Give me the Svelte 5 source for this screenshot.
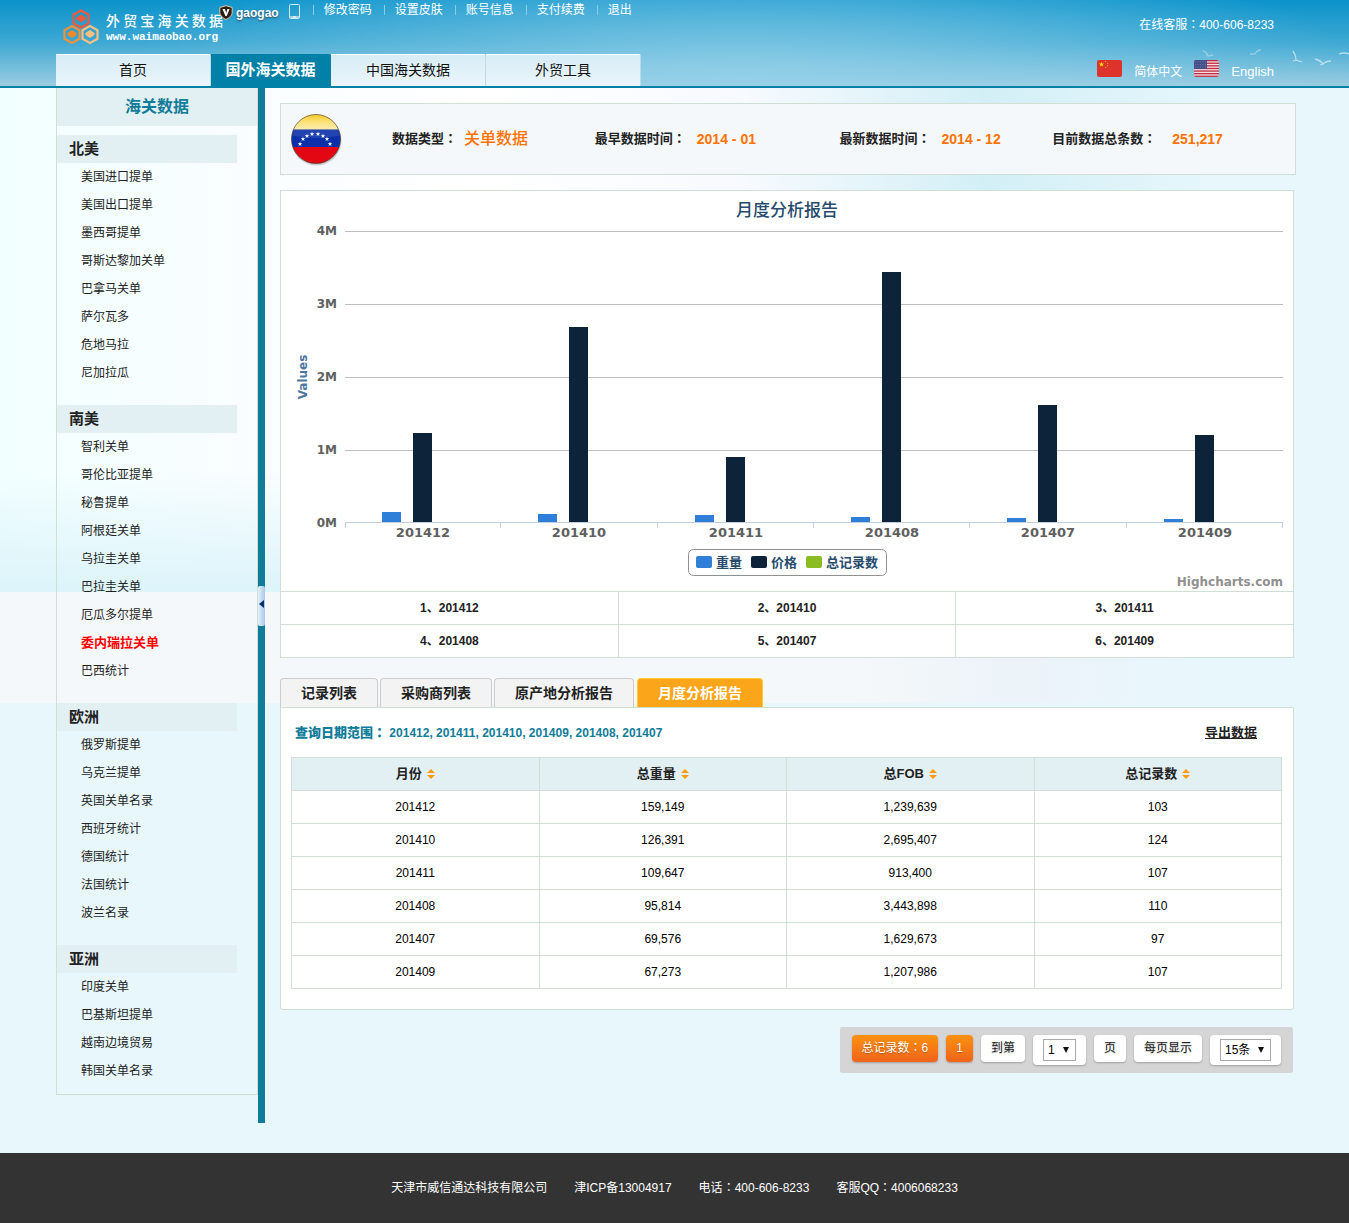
<script>
  const links = ['修改密码', '设置皮肤', '账号信息', '支付续费', '退出'];
  const nav = ['首页', '国外海关数据', '中国海关数据', '外贸工具'];
  const activeNav = '国外海关数据';
  const brand = [...'外贸宝海关数据'];

  const regions = [
    { name: '北美', items: ['美国进口提单', '美国出口提单', '墨西哥提单', '哥斯达黎加关单', '巴拿马关单', '萨尔瓦多', '危地马拉', '尼加拉瓜'] },
    { name: '南美', items: ['智利关单', '哥伦比亚提单', '秘鲁提单', '阿根廷关单', '乌拉圭关单', '巴拉圭关单', '厄瓜多尔提单', '委内瑞拉关单', '巴西统计'] },
    { name: '欧洲', items: ['俄罗斯提单', '乌克兰提单', '英国关单名录', '西班牙统计', '德国统计', '法国统计', '波兰名录'] },
    { name: '亚洲', items: ['印度关单', '巴基斯坦提单', '越南边境贸易', '韩国关单名录'] }
  ];
  const current = '委内瑞拉关单';

  const facts = [
    { label: '数据类型', value: '关单数据', kind: 'type' },
    { label: '最早数据时间', value: '2014 - 01', kind: 'date' },
    { label: '最新数据时间', value: '2014 - 12', kind: 'date' },
    { label: '目前数据总条数', value: '251,217', kind: 'total' }
  ];

  const rows = [
    { month: '201412', weight: 159149, fob: 1239639, count: 103 },
    { month: '201410', weight: 126391, fob: 2695407, count: 124 },
    { month: '201411', weight: 109647, fob: 913400, count: 107 },
    { month: '201408', weight: 95814, fob: 3443898, count: 110 },
    { month: '201407', weight: 69576, fob: 1629673, count: 97 },
    { month: '201409', weight: 67273, fob: 1207986, count: 107 }
  ];
  const fmt = (n) => n.toLocaleString('en-US');

  const plot = { left: 64, right: 1002, bottom: 331, unit: 73 };
  const slot = (plot.right - plot.left) / rows.length;
  const slotX = (i) => Math.round(plot.left + i * slot);
  const barH = (v) => Math.floor((v / 1e6) * plot.unit) - 1;
  const gridY = (m) => plot.bottom + 1 - Math.round(m * 73);
  const legend = [
    { name: '重量', color: '#2f7ed8', x: 415 },
    { name: '价格', color: '#0d233a', x: 470 },
    { name: '总记录数', color: '#8bbc21', x: 525 }
  ];

  const tabs = ['记录列表', '采购商列表', '原产地分析报告', '月度分析报告'];
  const activeTab = '月度分析报告';
  const heads = ['月份', '总重量', '总FOB', '总记录数'];
  const stars = [[10, 30], [13, 25], [17, 22], [22, 20], [28, 20], [33, 22], [37, 25], [40, 30]];
</script>

{#snippet colon()}<span class="colon">：</span>{/snippet}

<div class="page">
  <header>
    <svg class="birds" viewBox="0 0 150 40" aria-hidden="true">
      <g fill="none" stroke="#d3edf6" stroke-width="1.3" opacity=".75">
        <path d="M4 11q4 1 5 5l5-1M9 16l-2-2" opacity=".6" />
        <path d="M62 10q-4 0-6 4l-5 0" opacity=".6" />
        <path d="M94 11q3 4 3 9l6 2M97 20l-3 1" />
        <path d="M116 19q5 1 8 5q3-3 8-3M124 24l-3 1" />
        <path d="M140 14q5-2 10 0" />
      </g>
    </svg>
    <div class="top">
      <a class="logo" href="#home" aria-label="外贸宝海关数据">
        <svg width="38" height="36" viewBox="0 0 38 36" aria-hidden="true">
          <g fill="none" stroke-width="2.2">
            <path d="M19 1.500l7.500 4.200v8.600L19 18.500l-7.500-4.200V5.700z" stroke="#f0583a" />
            <path d="M10 17l7.500 4.200v8.600L10 34l-7.500-4.200v-8.600z" stroke="#e8933f" />
            <path d="M28 17l7.500 4.200v8.600L28 34l-7.500-4.200v-8.600z" stroke="#f8bf83" />
          </g>
          <path d="M14.500 8.500l4.500-3 4.500 3v2L19 13.500l-4.500-3z" fill="#f0583a" />
          <path d="M5.500 24l4.500-3 4.500 3v2L10 29l-4.500-3z" fill="#f08a2a" />
          <path d="M23.500 24l4.500-3 4.500 3v2L28 29l-4.500-3z" fill="#fcc07c" />
        </svg>
        <span class="brand">
          <span class="cn">{#each brand as ch}<b>{ch}</b>{/each}</span>
          <span class="url">www.waimaobao.org</span>
        </span>
      </a>
      <div class="user">
        <svg width="14" height="15" viewBox="0 0 14 15" aria-hidden="true">
          <path d="M7 .7l6.200 1.800v4.500c0 3.500-3 6-6.200 7.500C3.800 13 .8 10.500.8 7V2.500z" fill="#2c1e12" stroke="#e8c9a0" />
          <path d="M3.500 4h2.500L7.200 8 8.400 4h2.200L7.700 11H6.400z" fill="#fff" />
        </svg>
        <b>gaogao</b>
      </div>
      <svg class="phone" width="11" height="15" viewBox="0 0 11 15" aria-hidden="true">
        <rect x=".5" y=".5" width="10" height="14" rx="1" fill="none" stroke="#d5edf6" />
        <path d="M1 12h9v2H1z" fill="#a5d6ea" /><path d="M4 13h3" stroke="#fff" />
      </svg>
      <ul class="links">
        {#each links as l}<li><a href="#account">{l}</a></li>{/each}
      </ul>
      <div class="service">在线客服{@render colon()}400-606-8233</div>
    </div>
    <div class="bottom">
      <nav>
        {#each nav as n}<a href="#nav" class:active={n === activeNav}>{n}</a>{/each}
      </nav>
      <div class="langs">
        <svg width="25" height="17" viewBox="0 0 25 17" aria-hidden="true">
          <rect width="25" height="17" rx="2" fill="#de322c" />
          <path d="M4.500 1.800l.7 1.700h1.900L5.600 4.700l.6 1.900-1.700-1.100-1.700 1.100.6-1.900L1.900 3.500h1.900z" fill="#fd0" />
          <path d="M8 1.500h1.200M10 3.500h1.200M10 5.700h1.200M8 7.500h1.200" stroke="#e9a011" stroke-width="1.200" />
        </svg>
        <a href="#zh">简体中文</a>
        <svg width="25" height="17" viewBox="0 0 25 17" aria-hidden="true">
          <clipPath id="us"><rect width="25" height="17" rx="2" /></clipPath>
          <g clip-path="url(#us)">
            <rect width="25" height="17" fill="#f6dfe2" />
            {#each [0, 1, 2, 3, 4, 5, 6] as i}<rect y={i * 2.6} width="25" height="1.300" fill="#be2a3e" />{/each}
            <rect width="13" height="9" fill="#44508a" />
            <path d="M1 2h12M1 4.500h12M1 7h12" stroke="#7880ac" stroke-dasharray="1 1.500" stroke-width=".8" />
          </g>
        </svg>
        <a class="en" href="#en">English</a>
      </div>
    </div>
  </header>

  <div class="body">
    <aside>
      <h2>海关数据</h2>
      {#each regions as r}
        <section>
          <h3>{r.name}</h3>
          <ul>
            {#each r.items as item}<li><a href="#region" class:current={item === current}>{item}</a></li>{/each}
          </ul>
        </section>
      {/each}
    </aside>
    <div class="divider">
      <button aria-label="收起侧栏"><svg width="5" height="8" viewBox="0 0 5 8"><path d="M5 0v8L0 4z" fill="#0a2f66" /></svg></button>
    </div>

    <main>
      <div class="info">
        <svg width="54" height="54" viewBox="-1 -2 54 54" aria-hidden="true">
          <defs>
            <clipPath id="disc"><circle cx="26" cy="25" r="24.500" /></clipPath>
            <linearGradient id="yel" x1="0" x2="0" y1="0" y2="1"><stop offset="0" stop-color="#f5c81e" /><stop offset=".5" stop-color="#fbe27a" /><stop offset="1" stop-color="#fdeeb0" /></linearGradient>
          </defs>
          <circle cx="26.500" cy="26.500" r="25" fill="#9aa3a8" opacity=".5" />
          <g clip-path="url(#disc)">
            <rect width="52" height="16" fill="url(#yel)" />
            <rect y="15.500" width="52" height="18" fill="#0a2fa8" />
            <rect y="33" width="52" height="18" fill="#e30613" />
            <path d="M0 16h52v5Q26 27 0 21z" fill="#fff" opacity=".1" />
          </g>
          {#each stars as [x, y]}
            <path transform={`translate(${x} ${y})`} d="M0-2.200l.6 1.500h1.600L.9.400l.6 1.700L0 1.100l-1.500 1 .6-1.700-1.300-1.100h1.600z" fill="#fff" />
          {/each}
          <circle cx="26" cy="25" r="24.500" fill="none" stroke="#4a3a2a" stroke-opacity=".65" />
        </svg>
        {#each facts as f}
          <div class="fact {f.kind}"><b>{f.label}{@render colon()}</b><strong>{f.value}</strong></div>
        {/each}
      </div>

      <div class="report">
        <svg class="chart" viewBox="0 0 1012 400" role="img" aria-label="月度分析报告">
          <text class="title" x="506" y="25">月度分析报告</text>
          {#each [4, 3, 2, 1] as m}
            <path d={`M${plot.left} ${gridY(m) + 0.5}H${plot.right}`} stroke="#c0c0c0" />
          {/each}
          {#each [4, 3, 2, 1, 0] as m}
            <text class="tick" x="56" y={gridY(m) + 4}>{m}M</text>
          {/each}
          <text class="axis" transform="translate(26 186) rotate(-90)">Values</text>
          {#each rows as r, i}
            <rect x={slotX(i) + 37} y={plot.bottom - barH(r.weight)} width="19" height={barH(r.weight)} fill="#2f7ed8" />
            <rect x={slotX(i) + 68} y={plot.bottom - barH(r.fob)} width="19" height={barH(r.fob)} fill="#0d233a" />
            <text class="cat" x={slotX(i) + 78} y="346">{r.month}</text>
          {/each}
          {#each [0, 1, 2, 3, 4, 5, 6] as i}
            <path d={`M${slotX(i) + 0.5 - (i === 0 ? 0 : 1)} 331v6`} stroke="#c0d0e0" />
          {/each}
          <path d="M64 331.500H1002" stroke="#c0d0e0" />
          <rect x="407.500" y="358.500" width="198" height="26" rx="5" fill="#fff" stroke="#909090" />
          {#each legend as l}
            <rect x={l.x} y="365" width="16" height="12" rx="2" fill={l.color} />
            <text class="key" x={l.x + 20} y="376">{l.name}</text>
          {/each}
          <text class="credit" x="1002" y="395">Highcharts.com</text>
        </svg>
        <table class="months">
          <tbody>
            {#each [0, 3] as start}
              <tr>
                {#each rows.slice(start, start + 3) as r, i}<td>{start + i + 1}、{r.month}</td>{/each}
              </tr>
            {/each}
          </tbody>
        </table>
      </div>

      <div class="tabs">
        {#each tabs as t}<button class:active={t === activeTab}>{t}</button>{/each}
      </div>
      <div class="panel">
        <div class="range">
          <p><b>查询日期范围{@render colon()}</b> 201412, 201411, 201410, 201409, 201408, 201407</p>
          <a href="#export">导出数据</a>
        </div>
        <table class="data">
          <thead>
            <tr>
              {#each heads as h}
                <th scope="col">{h}<svg width="8" height="10" viewBox="0 0 8 10" aria-hidden="true"><path d="M4 0l4 4H0zM0 6h8L4 10z" fill="#ff9a0e" /></svg></th>
              {/each}
            </tr>
          </thead>
          <tbody>
            {#each rows as r}
              <tr><td>{r.month}</td><td>{fmt(r.weight)}</td><td>{fmt(r.fob)}</td><td>{r.count}</td></tr>
            {/each}
          </tbody>
        </table>
      </div>

      <div class="pager">
        <span class="pill hot">总记录数{@render colon()}6</span>
        <button class="pill hot">1</button>
        <label class="pill" for="goto">到第</label>
        <span class="pill box"><select id="goto"><option>1</option></select></span>
        <span class="pill">页</span>
        <label class="pill" for="size">每页显示</label>
        <span class="pill box wide"><select id="size"><option>15条</option></select></span>
      </div>
    </main>
  </div>

  <footer>
    <span>天津市威信通达科技有限公司</span>
    <span>津ICP备13004917</span>
    <span>电话{@render colon()}400-606-8233</span>
    <span>客服QQ{@render colon()}4006068233</span>
  </footer>
</div>

<style>
  :global(body) { margin: 0; background: #e8f7fc; }
  .page {
    font: 12px/18px "Liberation Sans", "Noto Sans CJK SC", sans-serif;
    color: #222;
  }
  .page, .page * { box-sizing: border-box; }
  ul, h2, h3, p { margin: 0; padding: 0; list-style: none; }
  a { color: inherit; text-decoration: none; }
  button { font: inherit; cursor: pointer; }
  .colon { font-family: "Noto Sans CJK TC", sans-serif; line-height: 1; }

  header {
    position: relative;
    color: #fff;
    border-bottom: 2px solid #0281a8;
    padding: 0 75px 0 56px;
    background:
      radial-gradient(ellipse 620px 150px at 55% 80px, rgba(150, 210, 234, .8), rgba(150, 210, 234, 0)),
      linear-gradient(#0b93cb, #3fa9d3 50%, #9ccde1);
  }
  .birds { position: absolute; right: 0; top: 40px; width: 150px; }
  .top { display: flex; height: 54px; }
  .logo { display: flex; padding: 9px 0 0 6px; gap: 6px; }
  .brand { display: flex; flex-direction: column; width: 117px; padding-top: 3px; }
  .cn { display: flex; justify-content: space-between; font-size: 14px; line-height: 18px; }
  .cn b { font-weight: 500; }
  .url { font: bold 11px/14px "Liberation Mono", monospace; }
  .user { display: flex; align-items: flex-start; gap: 3px; padding-top: 5px; margin-left: -4px; text-shadow: 0 1px 2px #345; }
  .user b { line-height: 16px; }
  .phone { margin: 4px 13px 0 10px; }
  .links { display: flex; padding-top: 1px; }
  .links li { position: relative; padding: 0 12px 0 11px; }
  .links li::before { content: ''; position: absolute; left: 0; top: 4px; height: 10px; border-left: 1px solid #8ccbe4; }
  .service { margin-left: auto; padding-top: 16px; }
  .bottom { display: flex; justify-content: space-between; height: 32px; }
  nav { display: flex; }
  nav a {
    width: 155px; text-align: center; font-size: 14px; line-height: 30px; color: #111;
    border-top: 1px solid #fff; border-right: 1px solid #b9dce6; border-radius: 0 2px 0 0;
    background: linear-gradient(#d7ecf5, #ebf5fb);
  }
  nav a.active { width: 120px; font-size: 15px; font-weight: bold; color: #fff; background: #0281a8; border-color: #0281a8; }
  .langs { display: flex; gap: 12px; padding-top: 6px; }
  .langs a { line-height: 24px; }
  .langs .en { font-size: 13px; }

  .body {
    display: grid; grid-template-columns: 202px 7px minmax(0, 1fr);
    padding: 0 53px 30px 56px;
    background-repeat: no-repeat;
    background-size: 290px 120px, 1200px 504px, 1200px 111px;
    background-position: 0 384px, 0 0, 0 504px;
    background-image:
      linear-gradient(rgba(218, 245, 250, 0), #dcf4fa),
      linear-gradient(90deg, #f2ffff, #f9fdff 20%, #fff 40%, #f7fafe 62%, #d3eff6 82%, #e4f6fb),
      linear-gradient(90deg, #f5f8fa 70%, #ecf3f9 85%, #e8f7fc);
  }
  aside { border: 1px solid #d0dfd3; border-top: 0; align-self: start; }
  h2 { font-size: 16px; line-height: 38px; text-align: center; color: #107c99; background: #e2eff3; }
  section { padding-bottom: 18px; }
  section:last-child { padding-bottom: 9px; }
  h2 + section { padding-top: 9px; }
  h3 { width: 180px; padding-left: 12px; font-size: 15px; line-height: 28px; background: #e2eff3; }
  aside li { padding-left: 24px; line-height: 28px; }
  .current { color: #f00; font-size: 13px; font-weight: bold; }
  .divider { display: flex; background: #107c99; }
  .divider button {
    width: 7px; height: 40px; margin-top: 498px; padding: 0 0 4px 1px; border: 0; border-radius: 2px;
    display: flex; align-items: center; background: linear-gradient(90deg, #e5f0fb, #a9c9e8);
  }
  main { display: flex; flex-direction: column; padding: 15px 0 50px 15px; }
  .info {
    display: grid; grid-template-columns: 103px 203fr 245fr 213fr 243fr; align-items: center;
    height: 72px; padding-left: 8px; border: 1px solid #d0dfd3; background: #f5f8fa;
  }
  .fact { display: flex; align-items: center; font-size: 13px; gap: 11px; white-space: nowrap; }
  .fact strong { color: #ff7300; font-size: 14px; }
  .fact.type { gap: 7px; }
  .fact.type strong { font-size: 16px; font-weight: 500; }
  .fact.total { gap: 16px; }
  .report, .panel { margin-right: 2px; background: #fff; border: 1px solid #d0dfd3; }
  .report { margin-top: 15px; }
  .chart { display: block; width: 100%; font: bold 12px "DejaVu Sans", "Noto Sans CJK SC", sans-serif; }
  .title { font-family: "Noto Sans CJK SC", sans-serif; font-size: 17px; font-weight: 500; fill: #274b6d; text-anchor: middle; }
  .tick { fill: #606060; text-anchor: end; }
  .cat { fill: #606060; text-anchor: middle; font-size: 13px; }
  .axis { fill: #4d759e; text-anchor: middle; }
  .key { fill: #274b6d; font-size: 13px; }
  .credit { fill: #909090; text-anchor: end; }
  table { width: 100%; border-collapse: collapse; table-layout: fixed; text-align: center; }
  td, th { padding: 0; height: 33px; border: 1px solid #d0dfd3; }
  .months { font-weight: bold; border-style: hidden; }
  .months tr:first-child td { border-top: 1px solid #d0dfd3; }
  .months tr:last-child td { height: 32px; }
  .months { border-top: 1px solid #d0dfd3; }

  .tabs { display: flex; gap: 2px; margin-top: 20px; }
  .tabs button {
    height: 30px; padding: 0 20px; margin-bottom: -1px; font-size: 14px; font-weight: bold; color: #222;
    border: 1px solid #ccc; border-bottom-color: #d0dfd3; border-radius: 4px 4px 0 0; background: #f3f3f3;
  }
  .tabs .active { margin-left: 1px; color: #fff; background: #faa51a; border-color: #fcc930; border-bottom: 0; }
  .panel { border-radius: 0 0 3px 3px; padding: 16px 11px 20px 10px; }
  .range { display: flex; justify-content: space-between; padding: 0 25px 15px 4px; font-weight: bold; }
  .range p { color: #107c99; }
  .range b, .range a { font-size: 13px; }
  .range a { text-decoration: underline; }
  .data { color: #000; }
  .data th { background: #e2eff3; color: #222; font-size: 13px; }
  .data th svg { margin-left: 5px; vertical-align: -1px; }

  .pager {
    align-self: flex-end; display: flex; align-items: flex-start; gap: 8px;
    margin: 17px 3px 0 0; padding: 8px 12px; background: #d5d5d5; border-radius: 2px;
  }
  .pill {
    padding: 0 10px; border: 0; border-radius: 4px; line-height: 27px; background: #fff;
    box-shadow: 0 1px 2px rgba(0, 0, 0, .25); text-shadow: 0 1px 1px rgba(0, 0, 0, .25);
  }
  .hot { color: #fff; background: linear-gradient(#fa9210, #f0631a); }
  .box { display: flex; padding: 4px 10px; position: relative; }
  .box::after {
    content: ''; position: absolute; right: 17px; top: 12px;
    border: 3px solid transparent; border-top: 6px solid #111; border-bottom: 0;
  }
  select {
    appearance: none; width: 33px; height: 22px; padding: 0 4px; font: inherit; line-height: 18px; color: #000;
    border: 1px solid #a9a9a9; border-radius: 0; background: #fff;
  }
  .wide select { width: 51px; }

  footer {
    display: flex; justify-content: center; gap: 27px;
    background: #333; color: #fff; line-height: 70px;
  }
</style>
